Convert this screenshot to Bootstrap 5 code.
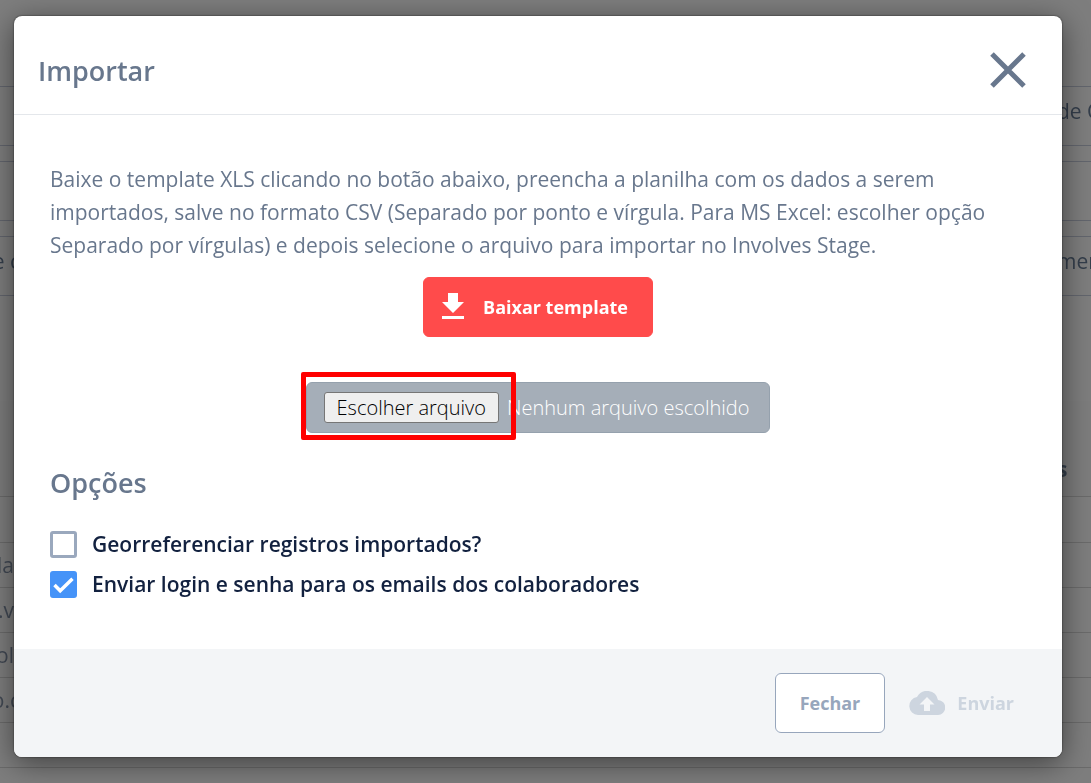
<!DOCTYPE html>
<html lang="pt-BR">
<head>
<meta charset="utf-8">
<meta name="viewport" content="width=device-width, initial-scale=1">
<title>Importar</title>
<link href="https://cdn.jsdelivr.net/npm/bootstrap@5.3.0/dist/css/bootstrap.min.css" rel="stylesheet">
<style>
  body { font-family: "Open Sans", "Noto Sans", sans-serif; font-size: 21px; line-height: 33px; color: #68778d; background: #7e7e7e; }
  /* dimmed page behind the dialog */
  .backpage { color: #343e4b; overflow: hidden; z-index: 0; white-space: nowrap; }
  .back-top { height: 86px; flex: none; }
  .back-field { height: 60px; flex: none; margin-bottom: 15px; padding-bottom: 10px; border: solid #63666e; border-width: 1px 0; }
  .back-gap { height: 90px; flex: none; }
  .back-head { height: 96px; flex: none; border-bottom: 1px solid #6b6b6b; background: #7d7d7d; padding-top: 52px; font-weight: 700; }
  .back-line { height: 45px; flex: none; border-bottom: 1px solid #6b6b6b; color: #424954; }
  .back-line-first { height: 46px; }
  .edge-start { width: 20px; display: flex; justify-content: flex-end; }
  .edge-tight { width: 14px; }
  .edge-end { width: 34px; }
  /* dialog */
  .dialog-wrap { padding: 16px 29px 26px 14px; z-index: 1; }
  .dialog-box { border: 0; border-radius: 8px; overflow: hidden; background: #fff; box-shadow: 0 6px 30px rgba(0,0,0,.5), 0 0 2px rgba(0,0,0,.7); color: inherit; }
  .modal-header { height: 99px; padding: 12px 32px 0 24px; border-bottom: 1px solid #e4e7eb; }
  .section-title { font-size: 27px; line-height: 36px; font-weight: 600; color: #68778d; margin: 0; }
  .close-x { border: 0; background: none; padding: 0; line-height: 0; margin-bottom: 2px; }
  .modal-body { padding: 48px 36px 51px; }
  .btn-main { height: 60px; border-radius: 6px; font-size: 18px; font-weight: 700; border-width: 1px; }
  .btn-download { --bs-btn-color: #fff; --bs-btn-bg: #ff4b4b; --bs-btn-border-color: #ff4b4b; --bs-btn-hover-color: #fff; --bs-btn-hover-bg: #e94040; padding: 0 24px 0 17px; gap: 18px; margin-top: 15px; }
  .file-box { height: 51px; margin-top: 45px; padding: 0 20px 0 17px; gap: 8px; background: #a5aeb8; border: 1px solid #95a1ad; border-radius: 6px; color: #fff; font-size: 20px; font-weight: 300; cursor: pointer; }
  .file-pick { height: 31px; line-height: 29px; padding: 0 12px; color: #000; background: #efefef; border: 1px solid #767676; border-radius: 3px; }
  .file-mark { left: -6px; top: -11px; width: 215px; height: 68px; border: 5px solid #f00; border-radius: 2px; pointer-events: none; }
  .options-title { margin: 32px 0 30px; }
  .option { display: flex; align-items: center; gap: 15px; height: 27px; padding: 0; margin: 0; min-height: 0; }
  .option + .option { margin-top: 13px; }
  .option .form-check-input { float: none; flex: none; width: 27px; height: 27px; margin: 0; border: 3px solid #9aa8bd; border-radius: 3px; }
  .option .form-check-input:checked { background-color: #4593f8; border-color: #4593f8; background-size: 27px 27px; background-position: center; background-image: url("data:image/svg+xml,%3csvg xmlns='http://www.w3.org/2000/svg' viewBox='0 0 27 27'%3e%3cpath fill='none' stroke='%23fff' stroke-width='3.500' d='M4.500 14l5.700 5.700L22.500 7.800'/%3e%3c/svg%3e"); }
  .option label { color: #12213f; font-weight: 600; }
  .modal-footer { height: 108px; padding: 0 48px 0 24px; gap: 24px; border: 0; background: #f3f5f7; border-radius: 0; }
  .modal-footer > * { margin: 0; }
  .btn-close-dialog { --bs-btn-color: #97a6bc; --bs-btn-bg: #fff; --bs-btn-border-color: #97a6bc; padding: 0 24px; }
  .btn-send { padding: 0; gap: 12px; border: 0; }
  .btn-send:disabled { color: #cdd5df; opacity: 1; border: 0; }
</style>
</head>
<body>
<div class="backpage position-fixed top-0 start-0 w-100 h-100 d-flex flex-column" aria-hidden="true">
  <div class="back-top"></div>
  <div class="back-field d-flex align-items-center justify-content-end"><span class="edge-end">de C</span></div>
  <div class="back-field"></div>
  <div class="back-field d-flex align-items-center justify-content-between"><span class="edge-start">e c</span><span class="edge-end">men</span></div>
  <div class="back-gap"></div>
  <div class="back-head d-flex justify-content-end"><span class="edge-end">s</span></div>
  <div class="back-line back-line-first"></div>
  <div class="back-line d-flex align-items-center"><span class="edge-start edge-tight">la</span></div>
  <div class="back-line d-flex align-items-center"><span class="edge-start edge-tight">.v</span></div>
  <div class="back-line d-flex align-items-center"><span class="edge-start edge-tight">ol</span></div>
  <div class="back-line d-flex align-items-center"><span class="edge-start">o.c</span></div>
  <div class="back-line"></div>
</div>

<div class="dialog-wrap position-relative" role="dialog" aria-labelledby="dialog-title">
  <form class="dialog-box">
    <div class="modal-header">
      <h1 class="section-title" id="dialog-title">Importar</h1>
      <button type="button" class="close-x" aria-label="Fechar janela">
        <svg width="44" height="44" viewBox="0 0 44 44"><path d="M6 6l32 32M38 6L6 38" stroke="#68778d" stroke-width="5" fill="none"/></svg>
      </button>
    </div>
    <div class="modal-body">
      <p class="mb-0">Baixe o template XLS clicando no botão abaixo, preencha a planilha com os dados a serem importados, salve no formato CSV (Separado por ponto e vírgula. Para MS Excel: escolher opção Separado por vírgulas) e depois selecione o arquivo para importar no Involves Stage.</p>
      <div class="d-flex flex-column align-items-center">
        <button type="button" class="btn btn-main btn-download d-inline-flex align-items-center">
          <svg width="24" height="28" viewBox="0 0 24 28" fill="#fff"><path d="M7 0h10v9h6L12 20 1 9h6zM1 23h22v3H1z"/></svg>
          Baixar template
        </button>
        <label class="file-box position-relative d-flex align-items-center" for="arquivo">
          <input type="file" id="arquivo" class="visually-hidden">
          <span class="file-pick">Escolher arquivo</span>
          <span>Nenhum arquivo escolhido</span>
          <span class="file-mark position-absolute"></span>
        </label>
      </div>
      <h2 class="section-title options-title">Opções</h2>
      <div class="form-check option">
        <input class="form-check-input" type="checkbox" id="geo">
        <label for="geo">Georreferenciar registros importados?</label>
      </div>
      <div class="form-check option">
        <input class="form-check-input" type="checkbox" id="login" checked>
        <label for="login">Enviar login e senha para os emails dos colaboradores</label>
      </div>
    </div>
    <div class="modal-footer">
      <button type="button" class="btn btn-main btn-close-dialog">Fechar</button>
      <button type="submit" class="btn btn-main btn-send d-inline-flex align-items-center" disabled>
        <svg width="36" height="24" viewBox="0 0 36 24" fill="#cdd5df"><path fill-rule="evenodd" d="M29 9A11.2 11.2 0 0 0 8 6.1 9 9 0 0 0 9 24h19.500a7.500 7.500 0 0 0 .5-15zM21 13.500V20h-6v-6.500h-4.500L18 6l7.500 7.500z"/></svg>
        Enviar
      </button>
    </div>
  </form>
</div>
<script src="https://cdn.jsdelivr.net/npm/bootstrap@5.3.0/dist/js/bootstrap.bundle.min.js"></script>
</body>
</html>
